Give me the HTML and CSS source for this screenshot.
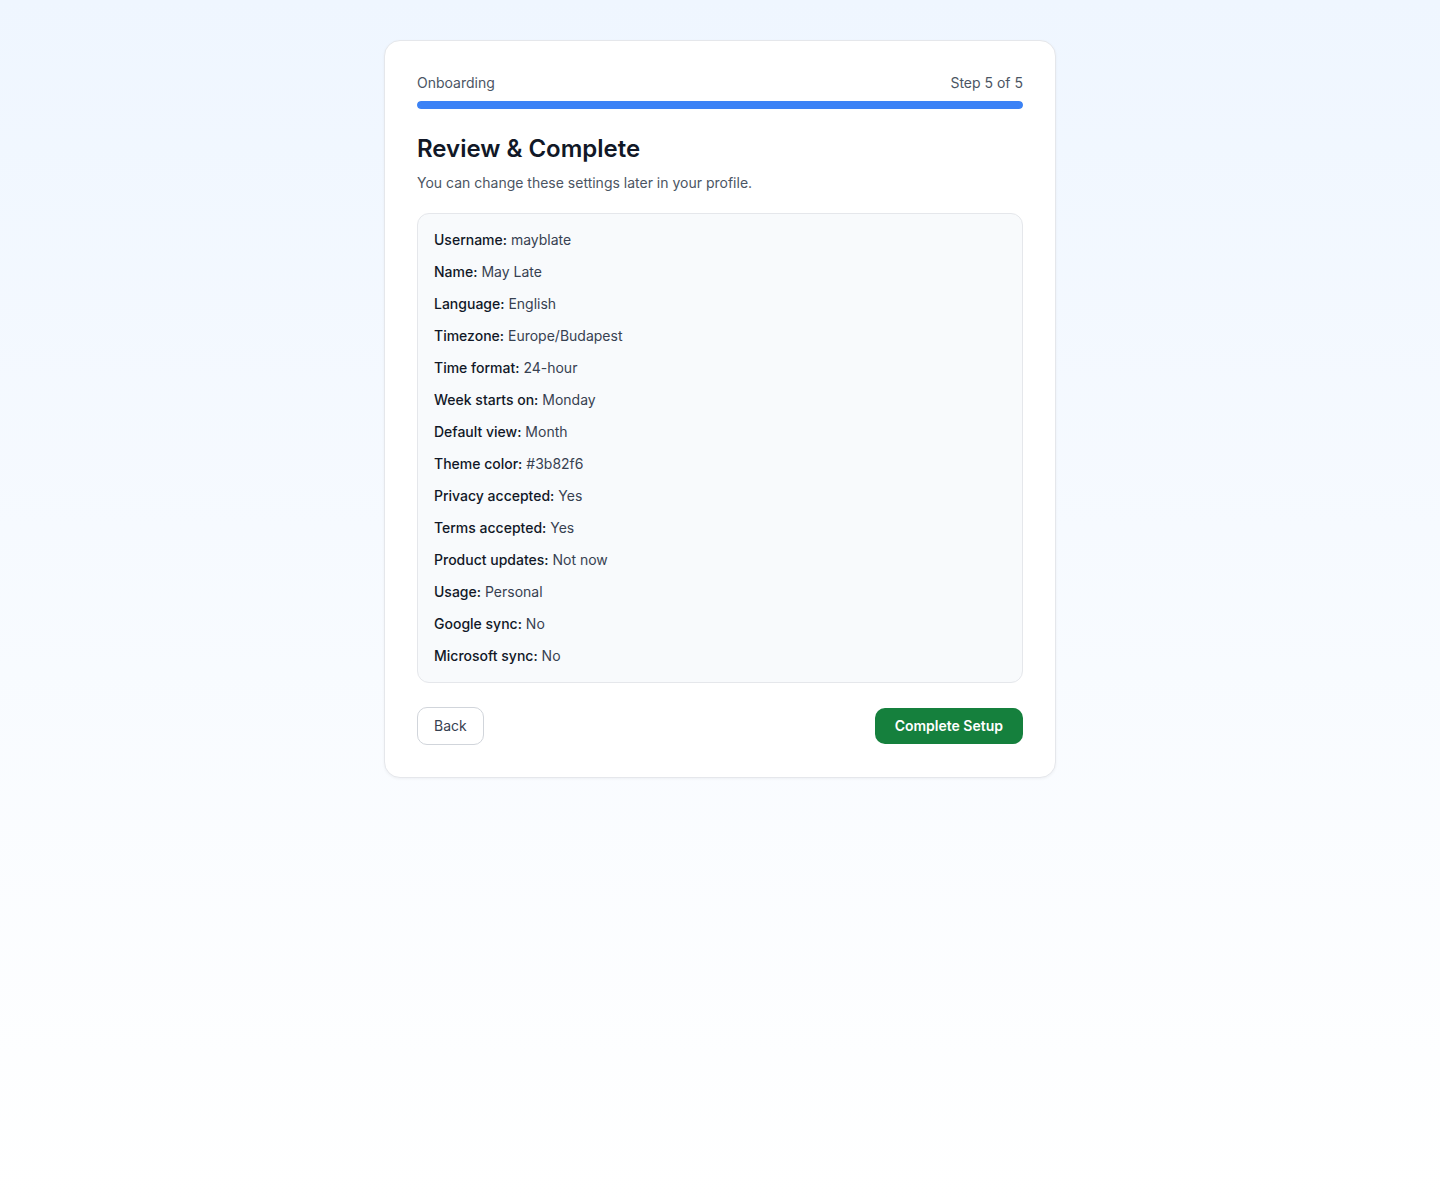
FILE: index.html
```html
<!DOCTYPE html>
<html lang="en">
<head>
<meta charset="utf-8">
<title>Onboarding</title>
<link rel="stylesheet" href="styles.css">
</head>
<body>
<main class="page">
  <section class="card">
    <div class="progress-head">
      <span>Onboarding</span>
      <span>Step 5 of 5</span>
    </div>
    <div class="progress"><div class="progress-fill" style="width:100%"></div></div>
    <h1 class="title">Review &amp; Complete</h1>
    <p class="subtitle">You can change these settings later in your profile.</p>
    <div class="summary">
      <div class="row"><strong>Username:</strong> mayblate</div>
      <div class="row"><strong>Name:</strong> May Late</div>
      <div class="row"><strong>Language:</strong> English</div>
      <div class="row"><strong>Timezone:</strong> Europe/Budapest</div>
      <div class="row"><strong>Time format:</strong> 24-hour</div>
      <div class="row"><strong>Week starts on:</strong> Monday</div>
      <div class="row"><strong>Default view:</strong> Month</div>
      <div class="row"><strong>Theme color:</strong> #3b82f6</div>
      <div class="row"><strong>Privacy accepted:</strong> Yes</div>
      <div class="row"><strong>Terms accepted:</strong> Yes</div>
      <div class="row"><strong>Product updates:</strong> Not now</div>
      <div class="row"><strong>Usage:</strong> Personal</div>
      <div class="row"><strong>Google sync:</strong> No</div>
      <div class="row"><strong>Microsoft sync:</strong> No</div>
    </div>
    <div class="actions">
      <button class="btn btn-back" type="button">Back</button>
      <button class="btn btn-primary" type="button">Complete Setup</button>
    </div>
  </section>
</main>
</body>
</html>
```

FILE: styles.css
```css
* { box-sizing: border-box; }
html, body { margin: 0; padding: 0; }
body {
  min-height: 1200px;
  font-family: Inter, "Noto Sans", "Liberation Sans", sans-serif;
  background: linear-gradient(180deg, #eff6ff 0%, #ffffff 100%);
  color: #111827;
}
.page {
  padding: 40px 16px;
  display: flex;
  justify-content: center;
}
.card {
  width: 672px;
  background: #ffffff;
  border: 1px solid #e5e7eb;
  border-radius: 16px;
  padding: 32px;
  box-shadow: 0 1px 3px rgba(15, 23, 42, 0.05);
}
.progress-head {
  display: flex;
  justify-content: space-between;
  font-size: 14px;
  line-height: 20px;
  color: #4b5563;
}
.progress {
  margin-top: 8px;
  height: 8px;
  border-radius: 999px;
  background: #e5e7eb;
  overflow: hidden;
}
.progress-fill {
  height: 100%;
  background: #3b82f6;
  border-radius: 999px;
}
.title {
  margin: 24px 0 0;
  font-size: 24px;
  line-height: 32px;
  font-weight: 600;
  color: #111827;
}
.subtitle {
  margin: 8px 0 0;
  font-size: 14px;
  line-height: 20px;
  color: #4b5563;
}
.summary {
  margin-top: 20px;
  background: #f8fafc;
  border: 1px solid #e5e7eb;
  border-radius: 12px;
  padding: 16px;
  display: flex;
  flex-direction: column;
  gap: 12px;
}
.row {
  font-size: 14px;
  line-height: 20px;
  color: #374151;
}
.row strong {
  font-weight: 500;
  color: #111827;
}
.actions {
  margin-top: 24px;
  display: flex;
  justify-content: space-between;
  align-items: center;
}
.btn {
  font-family: inherit;
  font-size: 14px;
  line-height: 20px;
  cursor: pointer;
}
.btn-back {
  padding: 8px 16px;
  background: #ffffff;
  color: #374151;
  border: 1px solid #d1d5db;
  border-radius: 10px;
}
.btn-primary {
  padding: 8px 20px;
  background: #15803d;
  color: #ffffff;
  border: none;
  border-radius: 10px;
  font-weight: 600;
}
```
